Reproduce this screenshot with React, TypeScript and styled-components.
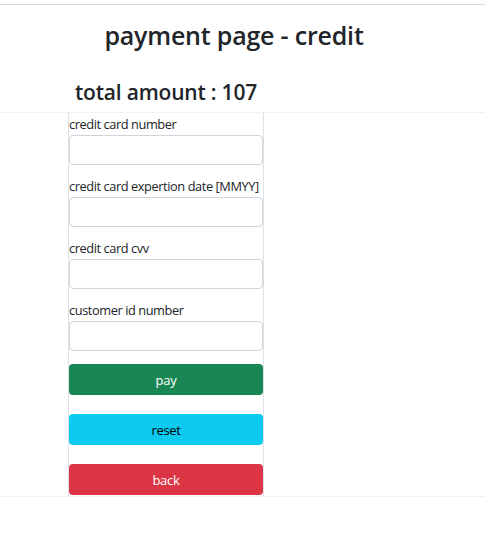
import React from "react";
import styled, { createGlobalStyle } from "styled-components";

const Global = createGlobalStyle`
  html, body { margin: 0; padding: 0; background: #fff; }
  body {
    font-family: "Open Sans", "Noto Sans", "Liberation Sans", sans-serif;
    color: #212529;
  }
  * { box-sizing: border-box; }
`;

const Page = styled.div`
  width: 100%;
  padding-top: 4px;
`;

const TopRule = styled.div`
  border-top: 1px solid #d8d8d8;
`;

const Header = styled.div`
  width: 468px;
  display: flex;
  justify-content: center;
  padding-top: 15px;
`;

const Title = styled.h2`
  margin: 0;
  font-size: 25px;
  line-height: 31px;
  font-weight: 600;
  letter-spacing: -0.2px;
`;

const AmountWrap = styled.div`
  margin-left: 68px;
  width: 196px;
  display: flex;
  justify-content: center;
  padding-top: 28px;
  padding-bottom: 6px;
`;

const Amount = styled.h3`
  margin: 0;
  font-size: 21px;
  line-height: 27px;
  font-weight: 600;
  white-space: nowrap;
  letter-spacing: -0.2px;
`;

const FormRow = styled.div`
  border-top: 1px solid #f1f1f1;
  border-bottom: 1px solid #f1f1f1;
`;

const FormColumn = styled.form`
  margin-left: 68px;
  width: 196px;
  border-left: 1px solid #dee2e6;
  border-right: 1px solid #dee2e6;
  display: flex;
  flex-direction: column;
  padding-top: 1px;
  padding-bottom: 1px;
`;

const Field = styled.div`
  display: flex;
  flex-direction: column;
  margin-bottom: 11px;
`;

const Label = styled.label`
  font-size: 12.8px;
  line-height: 21px;
  white-space: nowrap;
  letter-spacing: -0.42px;
`;

const Input = styled.input`
  height: 30px;
  width: 100%;
  border: 1px solid #ced4da;
  border-radius: 4px;
  background: #fff;
  padding: 0 8px;
  font: inherit;
  outline: none;
`;

const Buttons = styled.div`
  display: flex;
  flex-direction: column;
  gap: 19px;
  padding-top: 2px;
`;

const Btn = styled.button<{ $bg: string; $fg: string }>`
  height: 31px;
  width: 100%;
  border: none;
  border-radius: 4px;
  background: ${(p) => p.$bg};
  color: ${(p) => p.$fg};
  font-family: inherit;
  font-size: 13px;
  letter-spacing: -0.3px;
  cursor: pointer;
`;

const fields = [
  "credit card number",
  "credit card expertion date [MMYY]",
  "credit card cvv",
  "customer id number",
];

export default function App() {
  return (
    <Page>
      <Global />
      <TopRule />
      <Header>
        <Title>payment page - credit</Title>
      </Header>
      <AmountWrap>
        <Amount>total amount : 107</Amount>
      </AmountWrap>
      <FormRow>
        <FormColumn onSubmit={(e) => e.preventDefault()}>
          {fields.map((f) => (
            <Field key={f}>
              <Label>{f}</Label>
              <Input type="text" />
            </Field>
          ))}
          <Buttons>
            <Btn type="submit" $bg="#198754" $fg="#fff">pay</Btn>
            <Btn type="reset" $bg="#0dcaf0" $fg="#000">reset</Btn>
            <Btn type="button" $bg="#dc3545" $fg="#fff">back</Btn>
          </Buttons>
        </FormColumn>
      </FormRow>
    </Page>
  );
}
